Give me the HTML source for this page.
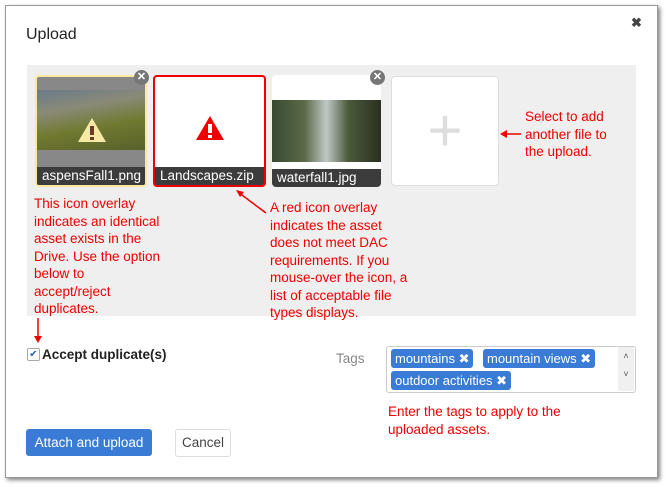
<!DOCTYPE html><html><head><style>
body{margin:0;width:666px;height:487px;background:#fff;font-family:"Liberation Sans",sans-serif;position:relative;overflow:hidden}
.dlg{position:absolute;left:5px;top:5px;width:651px;height:471px;border:1px solid #999;box-shadow:2px 2px 4px rgba(0,0,0,.5);background:#fff}
.a{position:absolute}
.red{color:#e00;font-size:13.5px;line-height:17.5px}
.th{position:absolute;top:75px;height:112px;border-radius:4px;overflow:hidden}
.lbl{position:absolute;left:0;right:0;bottom:0;height:18px;background:#3c3c3c;color:#fff;font-size:13.5px;padding-left:5px;line-height:18px}
.x{position:absolute;width:15px;height:15px;border-radius:50%;background:#777;color:#fff;font-size:11px;text-align:center;line-height:15px;font-weight:bold}
.tag{position:absolute;background:#3a7bd5;color:#fff;font-size:13px;border-radius:3px;height:19px;line-height:19px;padding:0 4px;white-space:nowrap}
</style></head><body>
<div class="dlg"></div>
<div class="a" style="left:26px;top:26px;font-size:16px;color:#222">Upload</div>
<div class="a" style="left:631px;top:15px;font-size:13px;color:#444;font-weight:bold">✖</div>
<div class="a" style="left:27px;top:65px;width:609px;height:251px;background:#efefef"></div>
<div class="th" style="left:35px;width:112px;background:#888;border:2px solid #fbe7a0;box-sizing:border-box">
<div class="a" style="left:0;top:13px;width:110px;height:60px;background:linear-gradient(170deg,#6a7a8a 0%,#8a8a78 30%,#707a30 60%,#58602a 100%)"></div>
<svg class="a" style="left:40px;top:40px" width="30" height="26"><path d="M15 1 L29 25 L1 25Z" fill="#f6e9a6"/><rect x="13" y="9" width="4" height="9" fill="#6a3a2a"/><rect x="13" y="20" width="4" height="3" fill="#6a3a2a"/></svg>
<div class="lbl">aspensFall1.png</div></div>
<div class="x" style="left:134px;top:70px">✕</div>
<div class="th" style="left:153px;width:113px;background:#fff;border:2px solid #e00;box-sizing:border-box">
<svg class="a" style="left:40px;top:38px" width="30" height="26"><path d="M15 1 L29 25 L1 25Z" fill="#e00"/><rect x="13" y="9" width="4" height="9" fill="#fff"/><rect x="13" y="20" width="4" height="3" fill="#fff"/></svg>
<div class="lbl">Landscapes.zip</div></div>
<div class="th" style="left:272px;width:109px;background:#fff">
<div class="a" style="left:0;top:25px;width:109px;height:62px;background:linear-gradient(90deg,#3a4a30,#5a6a48 30%,#c0c8c8 50%,#4a5a3a 70%,#2a3020)"></div>
<div class="lbl">waterfall1.jpg</div></div>
<div class="x" style="left:370px;top:70px">✕</div>
<div class="a" style="left:391px;top:76px;width:106px;height:108px;background:#fff;border:1px solid #ddd;border-radius:4px;color:#ddd;font-size:60px;text-align:center;line-height:108px">+</div>
<div class="a red" style="left:525px;top:108px">Select to add<br>another file to<br>the upload.</div>
<svg class="a" style="left:500px;top:128px" width="22" height="12"><path d="M4 6H21" stroke="#e00" stroke-width="1.5"/><path d="M0 6 L7 2 L7 10Z" fill="#e00"/></svg>
<div class="a red" style="left:34px;top:195px">This icon overlay<br>indicates an identical<br>asset exists in the<br>Drive. Use the option<br>below to<br>accept/reject<br>duplicates.</div>
<div class="a red" style="left:270px;top:199px">A red icon overlay<br>indicates the asset<br>does not meet DAC<br>requirements. If you<br>mouse-over the icon, a<br>list of acceptable file<br>types displays.</div>
<svg class="a" style="left:230px;top:188px" width="40" height="30"><path d="M36 25 L8 4" stroke="#e00" stroke-width="1.5"/><path d="M6 2 L14 4 L10 9Z" fill="#e00"/></svg>
<svg class="a" style="left:33px;top:318px" width="10" height="26"><path d="M5 0V20" stroke="#e00" stroke-width="1.5"/><path d="M1 18 L9 18 L5 25Z" fill="#e00"/></svg>
<div class="a" style="left:27px;top:348px;width:11px;height:11px;border:1px solid #aaa;border-radius:2px;font-size:10px;line-height:11px;text-align:center;color:#2a5db0">✔</div>
<div class="a" style="left:42px;top:347px;font-size:13.5px;font-weight:bold;color:#222">Accept duplicate(s)</div>
<div class="a" style="left:336px;top:351px;font-size:13.5px;color:#888">Tags</div>
<div class="a" style="left:386px;top:346px;width:248px;height:45px;border:1px solid #ccc;border-radius:3px"></div>
<div class="a" style="left:618px;top:347px;width:16px;height:44px;background:#f0f0f0;color:#555;font-size:9px;text-align:center;line-height:18px">˄<br>˅</div>
<div class="tag" style="left:391px;top:349px">mountains ✖</div>
<div class="tag" style="left:483px;top:349px">mountain views ✖</div>
<div class="tag" style="left:391px;top:371px">outdoor activities ✖</div>
<div class="a red" style="left:388px;top:403px;font-size:13.5px">Enter the tags to apply to the<br>uploaded assets.</div>
<div class="a" style="left:26px;top:429px;width:126px;height:27px;background:#3a7bd5;border-radius:3px;color:#fff;font-size:13.5px;text-align:center;line-height:27px">Attach and upload</div>
<div class="a" style="left:175px;top:429px;width:54px;height:26px;border:1px solid #ddd;border-radius:3px;color:#444;font-size:13.5px;text-align:center;line-height:26px">Cancel</div>
</body></html>
